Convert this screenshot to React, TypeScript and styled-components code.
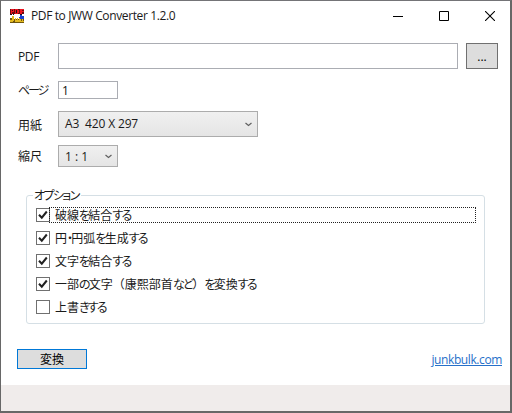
import React from "react";
import styled, { createGlobalStyle } from "styled-components";

const Global = createGlobalStyle`
  * { box-sizing: border-box; }
  body { margin: 0; background: #676767; overflow: hidden; }
  button, input { font: inherit; border-radius: 0; margin: 0; }
`;

const Window = styled.main`
  width: 512px;
  height: 413px;
  display: flex;
  flex-direction: column;
  background: #fff;
  border: solid #676767;
  border-width: 1px 2px 2px 1px;
  border-top-color: #747477;
  font: 12px/16px "Open Sans", "Noto Sans CJK JP", sans-serif;
  color: #1a1a1a;
`;

const TitleBar = styled.header`
  width: 511px;
  height: 30px;
  flex: none;
  display: flex;
  align-items: center;
  padding-left: 9px;
`;

const Title = styled.h1`
  flex: 1;
  margin: 0 0 0 6px;
  font-size: 12px;
  font-weight: 400;
  letter-spacing: -0.38px;
  white-space: nowrap;
`;

const WindowButton = styled.button`
  width: 46px;
  height: 30px;
  padding: 0;
  border: 0;
  background: none;
  display: grid;
  place-items: center;

  &:last-child { margin-right: -1px; }
`;

const Body = styled.section`
  flex: 1;
  padding: 12px 12px 0 16px;
`;

const FieldRow = styled.div<{ $h: number; $gap: number }>`
  display: flex;
  align-items: center;
  height: ${(p) => p.$h}px;
  margin-bottom: ${(p) => p.$gap}px;
`;

const Label = styled.label<{ $spacing?: number; $drop?: number }>`
  width: 41px;
  flex: none;
  padding: ${(p) => p.$drop ?? 2}px 0 0 1px;
  white-space: nowrap;
  letter-spacing: ${(p) => p.$spacing ?? 0}px;
  font-feature-settings: "palt";
`;

const Field = styled.input<{ $w: number }>`
  width: ${(p) => p.$w}px;
  height: 100%;
  padding: 1px 3px 0;
  border: 1px solid #abadb3;
  background: #fff;
  color: #111;
  outline: none;
`;

const Browse = styled.button`
  width: 32px;
  height: 26px;
  margin-left: 8px;
  padding: 2px 0 0;
  border: 1px solid #707070;
  background: #ddd;
`;

const Select = styled.div<{ $w: number; $spacing?: number; $drop?: number }>`
  width: ${(p) => p.$w}px;
  height: 100%;
  display: flex;
  align-items: center;
  justify-content: space-between;
  padding: ${(p) => p.$drop ?? 0}px 5px 0 6px;
  border: 1px solid #acacac;
  background: linear-gradient(#f0f0f0, #e5e5e5);
  white-space: pre;
  letter-spacing: ${(p) => p.$spacing ?? 0}px;
`;

const Group = styled.fieldset`
  width: 459px;
  height: 137px;
  margin: 20px 0 0 9px;
  padding: 4px 8px 0 9px;
  border: 1px solid #d5dfe5;
  border-radius: 3px;
`;

const Legend = styled.legend`
  height: 16px;
  width: 48px;
  margin-left: -3px;
  padding: 1px 1px 0;
  white-space: nowrap;
  font-feature-settings: "palt";
  letter-spacing: -1.6px;
`;

const Option = styled.label`
  height: 16px;
  margin-bottom: 7px;
  display: flex;
  align-items: center;
`;

const Box = styled.span`
  width: 14px;
  height: 14px;
  flex: none;
  border: 1px solid #707070;
  display: grid;
  place-items: center;
`;

const Caption = styled.span<{ $focus?: boolean }>`
  flex: 1;
  height: 16px;
  margin-left: -1px;
  padding-left: 5px;
  line-height: 15px;
  white-space: nowrap;
  border: 1px dotted ${(p) => (p.$focus ? "#222" : "transparent")};
`;

const Kana = styled.span`
  font-feature-settings: "palt";
  letter-spacing: -1.75px;
`;

const Actions = styled.footer`
  display: flex;
  justify-content: space-between;
  margin-top: 25px;
  padding-right: 8px;
  width: 493px;
`;

const Convert = styled.button`
  width: 70px;
  height: 20px;
  padding: 1px 0 0;
  border: 1px solid #0078d7;
  background: #ddd;
  line-height: 18px;
`;

const Link = styled.a`
  margin-top: 3px;
  color: #2670c9;
  text-decoration: underline;
  text-underline-offset: 1px;
  letter-spacing: -0.4px;
`;

const StatusBar = styled.div`
  height: 26px;
  flex: none;
  background: #f0eceb;
`;

const AppIcon = () => (
  <svg width="15" height="14" viewBox="0 0 15 14" shapeRendering="crispEdges">
    <path fill="#6d0a10" d="M0 0h14v5H0z" />
    <path fill="#ed1420" d="M1 0h3v3H2v2H1zM5 0h3v1h1v3H8v1H5zM10 0h4v1h-2v1h2v1h-2v2h-2z" />
    <path fill="#231015" d="M2 1h1v1H2zM6 1h1v3H6zM0 5h2v1H0zM3 5h2v1H3zM10 5h2v1h-2z" />
    <path fill="#fff" d="M2 6h2V5h6v5H4V8H2z" />
    <path fill="#1740d2" d="M10 6h2v1h2v3h-1v1h-2v-1H9V8h1z" />
    <path fill="#70560d" d="M0 9h4v1h10v4H0z" />
    <path fill="#e4ba20" d="M2 7h2v5H3v1H0v-2h2zM5 9h1v2h1V9h1v2h1V9h1v4H5zM10 10h1v2h1v-2h1v2h1v1h-4z" />
  </svg>
);

const Chevron = () => (
  <svg width="7" height="5" viewBox="0 0 7 5">
    <path d="M.5 1 3.5 3.5 6.5 1" fill="none" stroke="#606060" strokeWidth="1.2" />
  </svg>
);

const Check = () => (
  <svg width="12" height="12" viewBox="0 0 12 12">
    <path d="M2 5.7 4.8 8.7 9.8 2.5" fill="none" stroke="#212121" strokeWidth="2" />
  </svg>
);

const options: { text: React.ReactNode; checked: boolean; focus?: boolean }[] = [
  { text: <>破線<Kana>を</Kana>結合<Kana>する</Kana></>, checked: true, focus: true },
  { text: <>円<Kana>・</Kana>円弧<Kana>を</Kana>生成<Kana>する</Kana></>, checked: true },
  { text: <>文字<Kana>を</Kana>結合<Kana>する</Kana></>, checked: true },
  { text: <>一部<Kana>の</Kana>文字（康熙部首<Kana>など</Kana>）<Kana>を</Kana>変換<Kana>する</Kana></>, checked: true },
  { text: <>上書<Kana>きする</Kana></>, checked: false },
];

export default function App() {
  return (
    <>
      <Global />
      <Window>
        <TitleBar>
          <AppIcon />
          <Title>PDF to JWW Converter 1.2.0</Title>
          <WindowButton aria-label="Minimize">
            <svg width="10" height="10"><path d="M0 5.5h10" stroke="#000" /></svg>
          </WindowButton>
          <WindowButton aria-label="Maximize">
            <svg width="10" height="10"><path d="M.5.5h9v9h-9z" fill="none" stroke="#000" /></svg>
          </WindowButton>
          <WindowButton aria-label="Close">
            <svg width="10" height="10"><path d="m0 0 10 10M10 0 0 10" stroke="#000" strokeWidth="1.1" /></svg>
          </WindowButton>
        </TitleBar>
        <Body>
          <FieldRow $h={26} $gap={12}>
            <Label $spacing={-0.4}>PDF</Label>
            <Field $w={400} aria-label="PDF" />
            <Browse>...</Browse>
          </FieldRow>
          <FieldRow $h={18} $gap={12}>
            <Label $spacing={-2.2}>ページ</Label>
            <Field $w={60} defaultValue="1" />
          </FieldRow>
          <FieldRow $h={26} $gap={8}>
            <Label $drop={3}>用紙</Label>
            <Select $w={200} $spacing={-0.15}><span>A3  420 X 297</span><Chevron /></Select>
          </FieldRow>
          <FieldRow $h={22} $gap={0}>
            <Label>縮尺</Label>
            <Select $w={60} $drop={1}><span>1 : 1</span><Chevron /></Select>
          </FieldRow>
          <Group>
            <Legend>オプション</Legend>
            {options.map((o, i) => (
              <Option key={i}>
                <Box>{o.checked && <Check />}</Box>
                <Caption $focus={o.focus}>{o.text}</Caption>
              </Option>
            ))}
          </Group>
          <Actions>
            <Convert>変換</Convert>
            <Link>junkbulk.com</Link>
          </Actions>
        </Body>
        <StatusBar />
      </Window>
    </>
  );
}
